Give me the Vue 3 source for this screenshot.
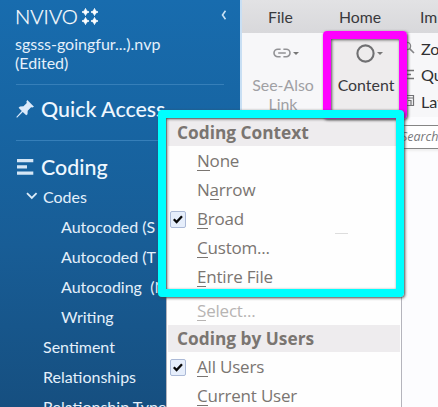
<script setup>
const nav = [
  { label: 'Codes', level: 0, open: true },
  { label: 'Autocoded (S', level: 1 },
  { label: 'Autocoded (T', level: 1 },
  { label: 'Autocoding  (N', level: 1 },
  { label: 'Writing', level: 1 },
  { label: 'Sentiment', level: 0 },
  { label: 'Relationships', level: 0 },
  { label: 'Relationship Type', level: 0 },
]
const context = [
  { pre: '', key: 'N', post: 'one' },
  { pre: 'N', key: 'a', post: 'rrow' },
  { pre: '', key: 'B', post: 'road', checked: true },
  { pre: '', key: 'C', post: 'ustom...' },
  { pre: '', key: 'E', post: 'ntire File' },
  { pre: '', key: 'S', post: 'elect...', disabled: true },
]
const users = [
  { pre: '', key: 'A', post: 'll Users', checked: true },
  { pre: '', key: 'C', post: 'urrent User' },
]
const groups = [
  { title: 'Coding Context', items: context },
  { title: 'Coding by Users', items: users },
]
</script>

<template>
  <div class="window">
    <aside class="sidebar">
      <div class="brand">
        <span class="word">NVIVO</span>
        <svg class="stars" width="18" height="18" viewBox="0 0 18 18">
          <path d="M4.5 .5Q5 3.5 8 4Q5 4.5 4.5 7.5Q4 4.5 1 4Q4 3.5 4.5 .5ZM13.5 .5Q14 3.5 17 4Q14 4.5 13.5 7.5Q13 4.5 10 4Q13 3.5 13.5 .5ZM4.5 9.5Q5 12.5 8 13Q5 13.5 4.5 16.5Q4 13.5 1 13Q4 12.5 4.5 9.5ZM13.5 9.5Q14 12.5 17 13Q14 13.5 13.5 16.5Q13 13.5 10 13Q13 12.5 13.5 9.5Z" fill="#fff" stroke="#fff" stroke-width=".9" />
        </svg>
        <svg class="collapse" width="6" height="10" viewBox="0 0 6 10"><path d="M4.5 .8L1.5 5L4.5 9.2" fill="none" stroke="#c9e1f4" stroke-width="1.6" /></svg>
      </div>
      <div class="project"><span class="file">sgsss-goingfur...).nvp</span><br />(Edited)</div>
      <section class="section quick">
        <svg width="18" height="18" viewBox="0 0 18 18"><path d="M11.3 0L18 6.7L16.3 7.6L15.1 7.3L11.7 10.7L11.5 14.2L10.2 15.3L6.8 12L1 17.7L.3 17L5.8 11L2.6 7.7L4 6.5L7.5 6.3L10.8 3L10.4 1.5Z" fill="#dceafa" /></svg>
        <span class="title">Quick Access</span>
      </section>
      <section class="section coding">
        <svg width="18" height="18" viewBox="0 0 18 18"><path d="M1 1H17.3V4.3H1ZM1 7.3H11V10.5H1ZM1 13.5H17.3V16.7H1Z" fill="#d5e6f5" /></svg>
        <span class="title">Coding</span>
      </section>
      <nav>
        <div v-for="n in nav" :key="n.label" class="node" :class="{ child: n.level }">
          <svg v-if="n.open" class="chevron" width="12" height="8" viewBox="0 0 12 8"><path d="M1 1.2L5.8 6L10.6 1.2" fill="none" stroke="#dcecf9" stroke-width="1.8" /></svg>
          <span>{{ n.label }}</span>
        </div>
      </nav>
    </aside>

    <main class="main">
      <div class="tabs">
        <span class="tab file-tab">File</span><span class="tab home-tab">Home</span><span class="tab">Im</span>
      </div>
      <div class="ribbon">
        <div class="tool link">
          <div class="glyph">
            <svg width="18" height="10" viewBox="0 0 18 10"><path d="M7.6 1.2H4.8A3.8 3.8 0 0 0 4.8 8.8H7.6M10.4 1.2H13.2A3.8 3.8 0 0 1 13.2 8.8H10.4M5.2 5H12.8" fill="none" stroke="#929295" stroke-width="1.6" /></svg>
            <i class="caret"></i>
          </div>
          <div class="caption">See-Also<br />Link</div>
        </div>
        <div class="tool content">
          <div class="glyph">
            <svg width="19" height="20" viewBox="0 0 19 20"><circle cx="9.5" cy="10.5" r="8.1" fill="none" stroke="#707072" stroke-width="2.1" /></svg>
            <i class="caret"></i>
          </div>
          <div class="caption">Content</div>
        </div>
        <div class="views">
          <div class="view"><svg width="15" height="14" viewBox="0 0 15 14"><circle cx="7" cy="5" r="3.6" fill="none" stroke="#858588" stroke-width="1.3" /><path d="M9.6 7.6L14 12" stroke="#858588" stroke-width="1.6" /></svg><span>Zo</span></div>
          <div class="view"><svg width="15" height="14" viewBox="0 0 15 14"><path d="M3 2.5H14M3 6.5H11M3 10.5H14" stroke="#737376" stroke-width="1.4" /></svg><span>Qu</span></div>
          <div class="view"><svg width="15" height="14" viewBox="0 0 15 14"><path d="M3 1.5H13.5V11.5H3ZM3 4H13.5M8 6.5H11V11" fill="none" stroke="#737376" stroke-width="1.2" /></svg><span>Lay</span></div>
        </div>
      </div>
      <div class="search">Search</div>
      <div class="pane"></div>
    </main>

    <div class="menu">
      <template v-for="g in groups" :key="g.title">
        <div class="heading"><span>{{ g.title }}</span></div>
        <div v-for="m in g.items" :key="m.key + m.post" class="item" :class="{ disabled: m.disabled }">
          <span class="gutter">
            <svg v-if="m.checked" width="16" height="17" viewBox="0 0 16 17"><rect x=".5" y=".5" width="15" height="16" rx="1.5" fill="#e6eefb" stroke="#abb9d6" /><path d="M3.8 8.2L6.6 11L12 5.2" fill="none" stroke="#080808" stroke-width="2.3" /></svg>
          </span>
          <span class="label">{{ m.pre }}<span class="key">{{ m.key }}</span>{{ m.post }}</span>
        </div>
      </template>
      <i class="dash"></i>
    </div>
    <div class="marker magenta"></div>
    <div class="marker cyan"></div>
  </div>
</template>

<style>
body { margin: 0; overflow: hidden; }
</style>

<style scoped>
* { box-sizing: border-box; }
svg { display: block; flex: none; }
.window { position: relative; display: flex; width: 438px; height: 407px; overflow: hidden; font-family: Lato, "Liberation Sans", sans-serif; }
.sidebar { width: 240px; flex: none; height: 407px; overflow: hidden; padding-left: 16px; color: #e4f0fb; background: linear-gradient(#186cae 0, #1765a3 120px, #185d96 245px, #164f80 407px); }
.brand { display: flex; height: 33px; align-items: flex-start; padding-top: 4px; }
.word { width: 64px; margin-left: -1px; font-size: 20.3px; line-height: 24px; font-weight: 300; color: #fff; -webkit-text-stroke: .25px #fff; }
.stars { margin: 4px 0 0 2px; }
.collapse { margin: 6px 0 0 122px; }
.project { height: 51px; padding-top: 1px; font-size: 16px; line-height: 19px; white-space: nowrap; margin-left: -1px; }
.section { display: flex; align-items: center; width: 208px; height: 56px; border-top: 1px solid #367fb9; gap: 7px; }
.quick { padding-bottom: 8px; }
.coding { height: 45px; padding-top: 8px; }
.title { font-size: 21.4px; line-height: 28px; font-weight: 500; color: #eef7ff; white-space: nowrap; }
.node { display: flex; align-items: center; height: 30px; padding-left: 27px; font-size: 16px; white-space: pre; }
nav { margin-top: -4px; }
.node.child { padding-left: 45px; }
.chevron { margin: 0 5px 0 -17px; }
.main { flex: 1; min-width: 0; height: 407px; overflow: hidden; border-left: 2px solid #c8dff4; background: #fcfcfe; }
.tabs { display: flex; height: 33px; background: linear-gradient(#e2e2e4, #d8d8db); padding: 7px 0 0 26px; font-size: 15.8px; line-height: 20px; color: #39393c; white-space: nowrap; }
.file-tab { width: 71px; flex: none; }
.home-tab { width: 81px; flex: none; }
.ribbon { display: flex; height: 84px; background: #f7f7f9; }
.tool { width: 82px; flex: none; text-align: center; font-size: 15.9px; line-height: 19px; white-space: nowrap; }
.glyph { display: flex; height: 40px; justify-content: center; align-items: center; gap: 2px; }
.link { color: #a0a0a4; }
.link .glyph { padding-left: 6px; }
.content { background: #eeeced; color: #39393c; }
.content .glyph { padding-left: 9px; }
.content .caption { padding-left: 2px; }
.caption { padding-top: 2px; }
.caret { border: 3px solid transparent; border-top: 3.5px solid #777; border-bottom: 0; }
.views { flex: none; width: 120px; padding-top: 2px; margin-left: -6px; color: #303033; font-size: 16.2px; }
.view { display: flex; align-items: center; height: 26.5px; white-space: nowrap; }
.view span { margin-left: 6px; }
.search { width: 240px; height: 24px; margin: 8px 0 0 155px; border: 1px solid #858585; border-width: 1px 0 1.5px; background: #fff; padding-left: 4px; font: italic 12.5px/22px "Open Sans", sans-serif; color: #77777a; box-shadow: 0 2px 2px #eee; white-space: nowrap; }
.pane { height: 260px; }
.menu { position: absolute; left: 166px; top: 118px; width: 236px; height: 300px; border: 1px solid #b4b4bc; background: #fefefe; color: #7a7571; font-family: "Open Sans", sans-serif; padding-left: 1px; }
.heading { height: 27px; width: 232px; margin-bottom: 1px; padding-left: 9px; background: #eeecee; font-weight: 700; font-size: 17.3px; line-height: 27px; white-space: nowrap; }
.item { display: flex; align-items: center; height: 28.9px; font-size: 17px; white-space: nowrap; }
.item.disabled { height: 33.5px; padding-top: 5px; color: #b7b4b3; }
.gutter { width: 29px; padding-left: 2px; flex: none; }
.label { line-height: 24px; letter-spacing: -0.2px; }
.key { display: inline-block; line-height: 19px; height: 20px; border-bottom: 1px solid currentColor; }
.dash { position: absolute; left: 168px; top: 114px; width: 13px; height: 1px; background: #ddd; }
.marker { position: absolute; border-radius: 4px; }
.marker::after { content: ""; position: absolute; inset: 0; box-shadow: inset 1px 1px 3px #555; }
.magenta { left: 323px; top: 31px; width: 84px; height: 88px; border: 8px solid #f0f; box-shadow: 1px 1px 3px #444; }
.cyan { left: 158px; top: 110px; width: 246px; height: 187px; border: 8px solid #0ff; box-shadow: 1px 1px 3px #444; }
</style>
